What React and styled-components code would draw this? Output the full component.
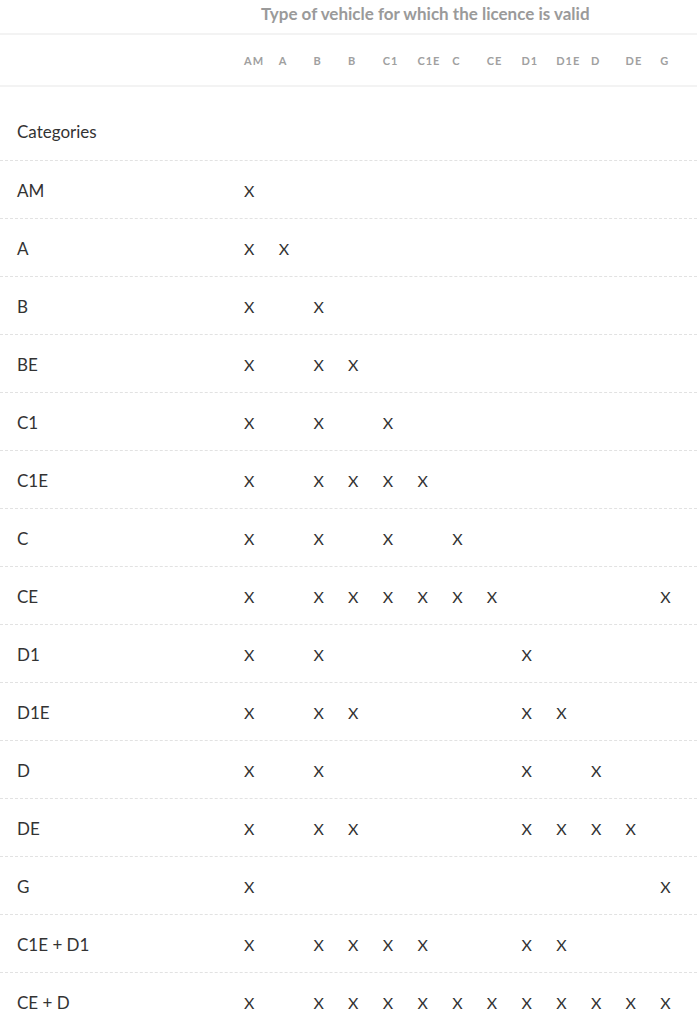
import React from "react";
import styled, { createGlobalStyle } from "styled-components";

const GlobalStyle = createGlobalStyle`
  body {
    margin: 0;
    background: #fff;
    font-family: Lato, "Open Sans", sans-serif;
  }
`;

const columns = ["AM", "A", "B", "B", "C1", "C1E", "C", "CE", "D1", "D1E", "D", "DE", "G"];

// each row lists the indexes of the columns that get an X
const rows = [
  { name: "AM", marks: [0] },
  { name: "A", marks: [0, 1] },
  { name: "B", marks: [0, 2] },
  { name: "BE", marks: [0, 2, 3] },
  { name: "C1", marks: [0, 2, 4] },
  { name: "C1E", marks: [0, 2, 3, 4, 5] },
  { name: "C", marks: [0, 2, 4, 6] },
  { name: "CE", marks: [0, 2, 3, 4, 5, 6, 7, 12] },
  { name: "D1", marks: [0, 2, 8] },
  { name: "D1E", marks: [0, 2, 3, 8, 9] },
  { name: "D", marks: [0, 2, 8, 10] },
  { name: "DE", marks: [0, 2, 3, 8, 9, 10, 11] },
  { name: "G", marks: [0, 12] },
  { name: "C1E + D1", marks: [0, 2, 3, 4, 5, 8, 9] },
  { name: "CE + D", marks: [0, 2, 3, 4, 5, 6, 7, 8, 9, 10, 11, 12] },
];

const Table = styled.div`
  width: 100%;
`;

const Row = styled.div`
  display: grid;
  grid-template-columns: 244px repeat(13, 34.7px);
  align-items: center;
  height: ${(p) => p.$height || 58}px;
  border-bottom: ${(p) => (p.$solid ? "2px solid #f3f3f3" : "1px dashed #e2e2e2")};
  box-sizing: border-box;
`;

const TitleRow = styled(Row)`
  align-items: start;
`;

const Title = styled.div`
  grid-column: 2 / -1;
  padding: 3px 0 0 17px;
  font-size: 17px;
  font-weight: 700;
  color: #9a9a9a;
  white-space: nowrap;
`;

const ColHead = styled.div`
  font-size: 11px;
  font-weight: 700;
  letter-spacing: 1px;
  color: #a0a0a0;
  white-space: nowrap;
`;

const Label = styled.div`
  padding-left: 17px;
  font-size: 17px;
  color: #333;
  align-self: ${(p) => (p.$bottom ? "end" : "center")};
  padding-bottom: ${(p) => (p.$bottom ? "18px" : "0")};
  margin-top: ${(p) => (p.$bottom ? "0" : "1px")};
`;

const Mark = styled.div`
  font-size: 16px;
  color: #333;
  margin-top: 1px;
`;

export default function App() {
  return (
    <>
      <GlobalStyle />
      <Table>
        <TitleRow $height={35} $solid>
          <Title>Type of vehicle for which the licence is valid</Title>
        </TitleRow>
        <Row $height={52} $solid>
          <div />
          {columns.map((c, i) => (
            <ColHead key={i}>{c}</ColHead>
          ))}
        </Row>
        <Row $height={74}>
          <Label $bottom>Categories</Label>
        </Row>
        {rows.map((r) => (
          <Row key={r.name}>
            <Label>{r.name}</Label>
            {columns.map((c, i) => (
              <Mark key={i}>{r.marks.includes(i) ? "X" : ""}</Mark>
            ))}
          </Row>
        ))}
      </Table>
    </>
  );
}
